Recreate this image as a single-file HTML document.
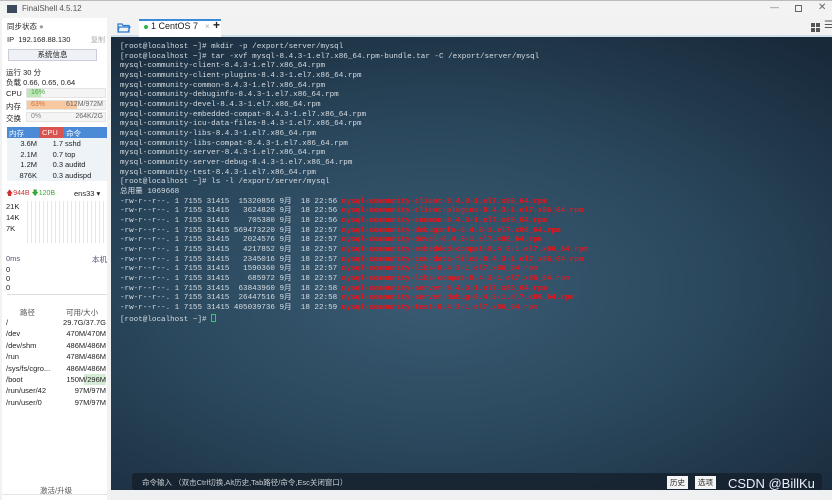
<!DOCTYPE html><html><head><meta charset="utf-8"><style>
*{margin:0;padding:0;box-sizing:border-box}
html,body{width:832px;height:500px;overflow:hidden}
body{background:#f2f2f2;font-family:"Liberation Sans","Noto Sans CJK SC",sans-serif;font-size:8px;color:#222;position:relative}
.abs{position:absolute}
#title{left:0;top:0;width:832px;height:18px;background:#f3f3f3;border-top:1px solid #bbb}
#left{left:2px;top:18px;width:105px;height:482px;background:#fff}
.row{position:absolute;left:4px;font-size:7.5px;white-space:nowrap}
.bar{position:absolute;left:24px;width:80px;height:10px;background:#f4f4f4;border:1px solid #e4e4e4}
#term{left:111px;top:37px;width:721px;height:453px;background:radial-gradient(ellipse 80% 70% at 45% 55%,#3a5c74 0%,#2a475c 50%,#18293a 100%)}
pre{position:absolute;left:9px;top:6px;font-family:"Liberation Mono","Noto Sans CJK SC",monospace;font-size:7.6px;line-height:9.67px;color:#d6dde2}
.r{color:#e8141a;font-weight:bold}
</style></head><body>
<div id="title" class="abs">
 <div class="abs" style="left:7px;top:4px;width:10px;height:8px;background:#3a4a5a"></div>
 <div class="abs" style="left:22px;top:3px;font-size:8px;color:#555">FinalShell 4.5.12</div>
 <div class="abs" style="left:770px;top:1px;color:#777;font-size:9px">—</div>
 <div class="abs" style="left:795px;top:4px;width:7px;height:7px;border:1px solid #666"></div>
 <div class="abs" style="left:818px;top:1px;color:#666;font-size:10px">✕</div>
</div>
<div class="abs" style="left:111px;top:18px;width:721px;height:19px;background:#f2f2f2;border-bottom:2px solid #cfe0ea">
 <svg class="abs" style="left:6px;top:4px" width="14" height="11"><path d="M1 2h4l1 1.5h6v6.5H1z M2 5h11l-2 5H1z" fill="none" stroke="#2a7ad0" stroke-width="1.2"/></svg>
 <div class="abs" style="left:28px;top:1px;width:82px;height:18px;background:#fff;border-top:2px solid #3a8ad8"></div>
 <div class="abs" style="left:33px;top:7px;width:4px;height:4px;border-radius:50%;background:#2db34a"></div>
 <div class="abs" style="left:40px;top:3px;font-size:9px;color:#222">1 CentOS 7</div>
 <div class="abs" style="left:94px;top:4px;font-size:8px;color:#aaa">×</div>
 <div class="abs" style="left:102px;top:0px;font-size:12px;font-weight:bold">+</div>
 <div class="abs" style="left:700px;top:5px;width:9px;height:9px;background:linear-gradient(#555,#555) 0 0/4px 4px no-repeat,linear-gradient(#555,#555) 5px 0/4px 4px no-repeat,linear-gradient(#555,#555) 0 5px/4px 4px no-repeat,linear-gradient(#555,#555) 5px 5px/4px 4px no-repeat"></div>
 <div class="abs" style="left:713px;top:2px;font-size:10px;color:#555">☰</div>
</div>
<div id="left" class="abs">
 <div class="row" style="top:3px;left:5px">同步状态 <span style="color:#999">●</span></div>
 <div class="row" style="top:17px;left:5px">IP&nbsp; 192.168.88.130</div>
 <div class="row" style="top:17px;left:89px;color:#aaa;font-size:7px">复制</div>
 <div class="abs" style="left:6px;top:31px;width:89px;height:12px;background:#eef2f6;border:1px solid #ccd;text-align:center;font-size:7.5px;line-height:10px">系统信息</div>
 <div class="row" style="top:49px">运行 30 分</div>
 <div class="row" style="top:59px">负载 0.66, 0.65, 0.64</div>
 <div class="row" style="top:71px">CPU</div><div class="bar" style="top:70px"><div style="width:14px;height:8px;background:#bfe6b8"></div><span class="abs" style="left:4px;top:0;font-size:7px;color:#4a4">16%</span></div>
 <div class="row" style="top:83px">内存</div><div class="bar" style="top:82px"><div style="width:50px;height:8px;background:#f8c8a0"></div><span class="abs" style="left:4px;top:0;font-size:7px;color:#c74">63%</span><span class="abs" style="right:2px;top:0;font-size:7px;color:#666">612M/972M</span></div>
 <div class="row" style="top:95px">交换</div><div class="bar" style="top:94px"><span class="abs" style="left:4px;top:0;font-size:7px;color:#888">0%</span><span class="abs" style="right:2px;top:0;font-size:7px;color:#666">264K/2G</span></div>
 <div class="abs" style="left:5px;top:109px;width:100px;height:54px;background:#eef3f8">
  <div class="abs" style="left:0;top:0;width:100px;height:11px;background:#4a8ad6"></div>
  <div class="abs" style="left:32px;top:0;width:24px;height:11px;background:#d9534f"></div>
  <div class="abs" style="left:2px;top:1px;color:#fff;font-size:7.5px">内存</div>
  <div class="abs" style="left:35px;top:1px;color:#fff;font-size:7.5px">CPU</div>
  <div class="abs" style="left:59px;top:1px;color:#fff;font-size:7.5px">命令</div>
  <div class="abs" style="left:0;top:12px;font-size:7.5px;line-height:10.5px;width:30px;text-align:right">3.6M<br>2.1M<br>1.2M<br>876K</div>
  <div class="abs" style="left:30px;top:12px;font-size:7.5px;line-height:10.5px;width:26px;text-align:right">1.7<br>0.7<br>0.3<br>0.3</div>
  <div class="abs" style="left:58px;top:12px;font-size:7.5px;line-height:10.5px">sshd<br>top<br>auditd<br>audispd</div>
 </div>
 <div class="row" style="top:171px;color:#c33;font-size:7px">🡅944B <span style="color:#3a3">🡇120B</span></div>
 <div class="row" style="top:171px;left:72px">ens33 ▾</div>
 <div class="abs" style="left:25px;top:183px;width:78px;height:42px;background:repeating-linear-gradient(90deg,#f6d8cc 0 1px,transparent 1px 4px);opacity:.8"></div>
 <div class="row" style="top:184px">21K</div><div class="row" style="top:195px">14K</div><div class="row" style="top:206px">7K</div>
 <div class="row" style="top:236px;color:#557">0ms</div><div class="row" style="top:236px;left:90px;color:#557">本机</div>
 <div class="row" style="top:247px;line-height:9px">0<br>0<br>0</div>
 <div class="abs" style="left:5px;top:276px;width:100px;height:1px;background:#ddd"></div>
 <div class="row" style="top:289px;left:18px;color:#555">路径</div><div class="row" style="top:289px;left:64px;color:#555">可用/大小</div>
 <div class="abs" style="left:4px;top:299px;width:100px;font-size:7.5px;line-height:11.4px">
  <div>/<span style="float:right">29.7G/37.7G</span></div>
  <div>/dev<span style="float:right">470M/470M</span></div>
  <div>/dev/shm<span style="float:right">486M/486M</span></div>
  <div>/run<span style="float:right">478M/486M</span></div>
  <div>/sys/fs/cgro...<span style="float:right">486M/486M</span></div>
  <div>/boot<span style="float:right;background:linear-gradient(90deg,transparent 45%,#d6ecd6 45%)">150M/296M</span></div>
  <div>/run/user/42<span style="float:right">97M/97M</span></div>
  <div>/run/user/0<span style="float:right">97M/97M</span></div>
 </div>
 <div class="abs" style="left:0;top:476px;width:105px;height:1px;background:#e4e4e4"></div>
 <div class="row" style="top:467px;left:38px;color:#555">激活/升级</div>
</div>
<div id="term" class="abs">
<pre>[root@localhost ~]# mkdir -p /export/server/mysql
[root@localhost ~]# tar -xvf mysql-8.4.3-1.el7.x86_64.rpm-bundle.tar -C /export/server/mysql
mysql-community-client-8.4.3-1.el7.x86_64.rpm
mysql-community-client-plugins-8.4.3-1.el7.x86_64.rpm
mysql-community-common-8.4.3-1.el7.x86_64.rpm
mysql-community-debuginfo-8.4.3-1.el7.x86_64.rpm
mysql-community-devel-8.4.3-1.el7.x86_64.rpm
mysql-community-embedded-compat-8.4.3-1.el7.x86_64.rpm
mysql-community-icu-data-files-8.4.3-1.el7.x86_64.rpm
mysql-community-libs-8.4.3-1.el7.x86_64.rpm
mysql-community-libs-compat-8.4.3-1.el7.x86_64.rpm
mysql-community-server-8.4.3-1.el7.x86_64.rpm
mysql-community-server-debug-8.4.3-1.el7.x86_64.rpm
mysql-community-test-8.4.3-1.el7.x86_64.rpm
[root@localhost ~]# ls -l /export/server/mysql
总用量 1069668
-rw-r--r--. 1 7155 31415  15320856 9月  18 22:56 <span class="r">mysql-community-client-8.4.3-1.el7.x86_64.rpm</span>
-rw-r--r--. 1 7155 31415   3624820 9月  18 22:56 <span class="r">mysql-community-client-plugins-8.4.3-1.el7.x86_64.rpm</span>
-rw-r--r--. 1 7155 31415    705380 9月  18 22:56 <span class="r">mysql-community-common-8.4.3-1.el7.x86_64.rpm</span>
-rw-r--r--. 1 7155 31415 569473220 9月  18 22:57 <span class="r">mysql-community-debuginfo-8.4.3-1.el7.x86_64.rpm</span>
-rw-r--r--. 1 7155 31415   2024576 9月  18 22:57 <span class="r">mysql-community-devel-8.4.3-1.el7.x86_64.rpm</span>
-rw-r--r--. 1 7155 31415   4217852 9月  18 22:57 <span class="r">mysql-community-embedded-compat-8.4.3-1.el7.x86_64.rpm</span>
-rw-r--r--. 1 7155 31415   2345016 9月  18 22:57 <span class="r">mysql-community-icu-data-files-8.4.3-1.el7.x86_64.rpm</span>
-rw-r--r--. 1 7155 31415   1590360 9月  18 22:57 <span class="r">mysql-community-libs-8.4.3-1.el7.x86_64.rpm</span>
-rw-r--r--. 1 7155 31415    685972 9月  18 22:57 <span class="r">mysql-community-libs-compat-8.4.3-1.el7.x86_64.rpm</span>
-rw-r--r--. 1 7155 31415  63843960 9月  18 22:58 <span class="r">mysql-community-server-8.4.3-1.el7.x86_64.rpm</span>
-rw-r--r--. 1 7155 31415  26447516 9月  18 22:58 <span class="r">mysql-community-server-debug-8.4.3-1.el7.x86_64.rpm</span>
-rw-r--r--. 1 7155 31415 405039736 9月  18 22:59 <span class="r">mysql-community-test-8.4.3-1.el7.x86_64.rpm</span>
[root@localhost ~]# <span style="display:inline-block;width:5px;height:8px;border:1px solid #3c6;vertical-align:-1px"></span></pre>
 <div class="abs" style="left:21px;top:436px;width:690px;height:17px;background:rgba(20,30,40,.75);border-radius:3px">
  <div class="abs" style="left:10px;top:4px;color:#c8ced4;font-size:7.5px">命令输入 （双击Ctrl切换,Alt历史,Tab路径/命令,Esc关闭窗口）</div>
  <div class="abs" style="left:535px;top:3px;background:#f4f4f4;color:#222;font-size:7.5px;padding:1px 3px">历史</div>
  <div class="abs" style="left:563px;top:3px;background:#f4f4f4;color:#222;font-size:7.5px;padding:1px 3px">选项</div>
 </div>
 <div class="abs" style="left:617px;top:439px;color:#eef;font-size:13px">CSDN @BillKu</div>
</div>
<div class="abs" style="left:111px;top:490px;width:721px;height:10px;background:#eef0f2"></div>
</body></html>
